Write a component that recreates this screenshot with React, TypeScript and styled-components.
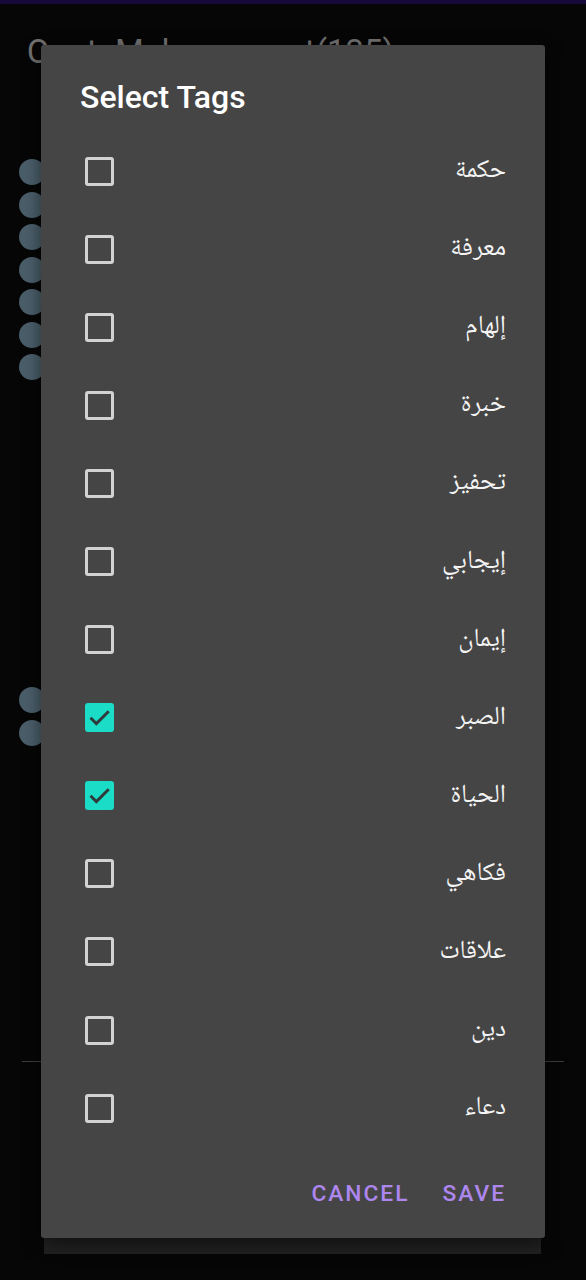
import React from "react";
import styled, { createGlobalStyle } from "styled-components";

const GlobalStyle = createGlobalStyle`
  html, body { margin: 0; padding: 0; background: #060606; }
  body { font-family: Roboto, "Noto Sans", sans-serif; }
`;

const Page = styled.div`
  position: relative;
  width: 586px;
  height: 1280px;
  overflow: hidden;
  background: #060606;
`;

const TopBar = styled.div`
  height: 4px;
  background: #17093c;
`;

const AppTitle = styled.div`
  margin-top: 31px;
  padding-left: 27px;
  font-family: Roboto, sans-serif;
  font-size: 33px;
  line-height: 33px;
  color: #707070;
  white-space: nowrap;
`;

const DotGroup = styled.div<{ $top: number }>`
  display: flex;
  flex-direction: column;
  gap: 6.5px;
  padding-left: 19px;
  margin-top: ${(p) => p.$top}px;
`;

const Dot = styled.div`
  width: 26px;
  height: 26px;
  border-radius: 50%;
  background: #4a5e6a;
`;

const Divider = styled.div`
  height: 1px;
  margin: 315.5px 22px 0 22px;
  background: #3c3c3c;
`;

const BottomCard = styled.div`
  height: 16px;
  margin: 176px 45px 0 44px;
  background: #212121;
`;

const Dialog = styled.div`
  position: absolute;
  top: 45px;
  left: 41px;
  width: 504px;
  height: 1193px;
  box-sizing: border-box;
  padding: 33px 39px 16px 44px;
  background: #454545;
  border-radius: 3px;
  box-shadow: 0 6px 18px rgba(0, 0, 0, 0.5);
  display: flex;
  flex-direction: column;
`;

const DialogTitle = styled.h2`
  margin: 0;
  font-family: Roboto, sans-serif;
  font-weight: 500;
  font-size: 32px;
  line-height: 38px;
  color: #ffffff;
  margin-left: -5px;
`;

const TagList = styled.div`
  margin-top: 16px;
  display: flex;
  flex-direction: column;
`;

const TagRow = styled.label`
  height: 78.1px;
  display: flex;
  align-items: center;
  justify-content: space-between;
`;

const Box = styled.span<{ $checked: boolean }>`
  width: 29px;
  height: 29px;
  box-sizing: border-box;
  border-radius: 3px;
  border: ${(p) => (p.$checked ? "none" : "3px solid #d2d2d2")};
  background: ${(p) => (p.$checked ? "#1bdcc7" : "transparent")};
  display: flex;
  align-items: center;
  justify-content: center;
`;

const TagText = styled.span`
  font-family: "Noto Naskh Arabic", "Noto Sans Arabic", "DejaVu Sans", sans-serif;
  font-size: 26px;
  color: #f4f4f4;
  direction: rtl;
`;

const Actions = styled.div`
  margin-top: auto;
  height: 58px;
  display: flex;
  justify-content: flex-end;
  align-items: center;
  gap: 33px;
  margin-right: 0;
`;

const ActionButton = styled.button`
  background: none;
  border: none;
  padding: 0;
  font-family: Roboto, sans-serif;
  font-weight: 500;
  font-size: 22.75px;
  letter-spacing: 2px;
  color: #ad86ee;
  text-transform: uppercase;
  cursor: pointer;
`;

const tags: { label: string; checked: boolean }[] = [
  { label: "حكمة", checked: false },
  { label: "معرفة", checked: false },
  { label: "إلهام", checked: false },
  { label: "خبرة", checked: false },
  { label: "تحفيز", checked: false },
  { label: "إيجابي", checked: false },
  { label: "إيمان", checked: false },
  { label: "الصبر", checked: true },
  { label: "الحياة", checked: true },
  { label: "فكاهي", checked: false },
  { label: "علاقات", checked: false },
  { label: "دين", checked: false },
  { label: "دعاء", checked: false },
];

const Check = () => (
  <svg width="27" height="27" viewBox="0 0 24 24">
    <path d="M4 12.2 L9.2 17.4 L20.2 6.4" fill="none" stroke="#2f3a3a" strokeWidth="2.6" />
  </svg>
);

export default function App() {
  return (
    <Page>
      <GlobalStyle />
      <TopBar />
      <AppTitle>QuoteMaker - count(135)</AppTitle>
      <DotGroup $top={91}>
        {Array.from({ length: 7 }).map((_, i) => (
          <Dot key={i} />
        ))}
      </DotGroup>
      <DotGroup $top={307}>
        {Array.from({ length: 2 }).map((_, i) => (
          <Dot key={i} />
        ))}
      </DotGroup>
      <Divider />
      <BottomCard />
      <Dialog>
        <DialogTitle>Select Tags</DialogTitle>
        <TagList>
          {tags.map((t) => (
            <TagRow key={t.label}>
              <Box $checked={t.checked}>{t.checked && <Check />}</Box>
              <TagText>{t.label}</TagText>
            </TagRow>
          ))}
        </TagList>
        <Actions>
          <ActionButton>Cancel</ActionButton>
          <ActionButton>Save</ActionButton>
        </Actions>
      </Dialog>
    </Page>
  );
}
